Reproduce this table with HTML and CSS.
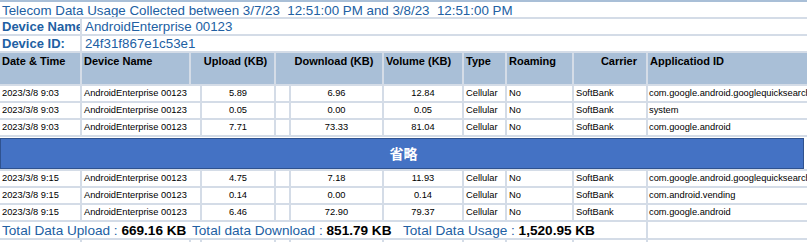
FILE: index.html
```html
<!DOCTYPE html>
<html lang="en">
<head>
<meta charset="utf-8">
<title>Telecom Data Usage</title>
<link rel="stylesheet" href="styles.css">
</head>
<body>
<div class="sheet">
  <div class="c title span-all">Telecom Data Usage Collected between 3/7/23&nbsp; 12:51:00 PM and 3/8/23&nbsp; 12:51:00 PM</div>

  <div class="c label">Device Name</div>
  <div class="c value span-rest">AndroidEnterprise 00123</div>

  <div class="c label">Device ID:</div>
  <div class="c value span-rest">24f31f867e1c53e1</div>

  <div class="c h">Date &amp; Time</div>
  <div class="c h">Device Name</div>
  <div class="c h h-up">Upload (KB)</div>
  <div class="c h h-down">Download (KB)</div>
  <div class="c h">Volume (KB)</div>
  <div class="c h">Type</div>
  <div class="c h">Roaming</div>
  <div class="c h h-carrier">Carrier</div>
  <div class="c h">Applicatiod ID</div>

  <div class="c d">2023/3/8 9:03</div><div class="c d dev">AndroidEnterprise 00123</div><div class="c d num">5.89</div><div class="c d"></div><div class="c d num">6.96</div><div class="c d num">12.84</div><div class="c d">Cellular</div><div class="c d">No</div><div class="c d">SoftBank</div><div class="c d app">com.google.android.googlequicksearchbox</div>
  <div class="c d">2023/3/8 9:03</div><div class="c d dev">AndroidEnterprise 00123</div><div class="c d num">0.05</div><div class="c d"></div><div class="c d num">0.00</div><div class="c d num">0.05</div><div class="c d">Cellular</div><div class="c d">No</div><div class="c d">SoftBank</div><div class="c d app">system</div>
  <div class="c d">2023/3/8 9:03</div><div class="c d dev">AndroidEnterprise 00123</div><div class="c d num">7.71</div><div class="c d"></div><div class="c d num">73.33</div><div class="c d num">81.04</div><div class="c d">Cellular</div><div class="c d">No</div><div class="c d">SoftBank</div><div class="c d app">com.google.android</div>

  <div class="banner-row span-all"><div class="banner">省略</div></div>

  <div class="c d">2023/3/8 9:15</div><div class="c d dev">AndroidEnterprise 00123</div><div class="c d num">4.75</div><div class="c d"></div><div class="c d num">7.18</div><div class="c d num">11.93</div><div class="c d">Cellular</div><div class="c d">No</div><div class="c d">SoftBank</div><div class="c d app">com.google.android.googlequicksearchbox</div>
  <div class="c d">2023/3/8 9:15</div><div class="c d dev">AndroidEnterprise 00123</div><div class="c d num">0.14</div><div class="c d"></div><div class="c d num">0.00</div><div class="c d num">0.14</div><div class="c d">Cellular</div><div class="c d">No</div><div class="c d">SoftBank</div><div class="c d app">com.android.vending</div>
  <div class="c d">2023/3/8 9:15</div><div class="c d dev">AndroidEnterprise 00123</div><div class="c d num">6.46</div><div class="c d"></div><div class="c d num">72.90</div><div class="c d num">79.37</div><div class="c d">Cellular</div><div class="c d">No</div><div class="c d">SoftBank</div><div class="c d app">com.google.android</div>

  <div class="c totals span-total">
    <span class="tot tot-up"><span class="tl">Total Data Upload : </span><b>669.16 KB</b></span>
    <span class="tot tot-down"><span class="tl">Total data Download : </span><b>851.79 KB</b></span>
    <span class="tot"><span class="tl">Total Data Usage : </span><b>1,520.95 KB</b></span>
  </div>
  <div class="c totals-end"></div>

  <div class="c"></div><div class="c"></div><div class="c"></div><div class="c"></div><div class="c"></div><div class="c"></div><div class="c"></div><div class="c"></div><div class="c"></div><div class="c"></div><div class="c"></div>
</div>
</body>
</html>
```
FILE: styles.css
```css
html, body {
  margin: 0;
  padding: 0;
  background: #ffffff;
}

body {
  width: 808px;
  height: 244px;
  overflow: hidden;
  font-family: "Liberation Sans", Arial, sans-serif;
}

.sheet {
  display: grid;
  grid-template-columns: 80px 107px 9px 72px 13px 91px 78px 41px 65px 72px 159px;
  grid-template-rows: 15px 15px 15px 31px 15px 15px 15px 32px 15px 15px 15px 16px 2px;
  gap: 2px;
  width: 807px;
  background: #d4dce7;
  border-top: 2px solid #a9bfd7;
}

.c {
  background: #ffffff;
  overflow: hidden;
  white-space: nowrap;
  min-width: 0;
}

.span-all {
  grid-column: 1 / -1;
}

.span-rest {
  grid-column: 2 / -1;
}

.title {
  color: #2160a3;
  font-size: 13.33px;
  line-height: 17px;
  padding-left: 2px;
}

.label {
  color: #2160a3;
  font-size: 13px;
  font-weight: bold;
  line-height: 16px;
  padding-left: 2px;
}

.value {
  color: #2160a3;
  font-size: 13.33px;
  line-height: 16px;
  padding-left: 3px;
}

.h {
  background: #a9bfd7;
  color: #000000;
  font-size: 11px;
  font-weight: bold;
  line-height: 13px;
  padding: 2px 0 0 2px;
}

.h-up {
  grid-column: span 2;
  text-align: center;
  padding-left: 6px;
}

.h-down {
  grid-column: span 2;
  text-align: center;
  padding-left: 10px;
}

.h-carrier {
  text-align: right;
  padding-right: 9px;
}

.d {
  color: #000000;
  font-size: 9.3px;
  line-height: 15px;
  padding-left: 2px;
}

.dev {
  grid-column: span 2;
  padding-left: 2px;
}

.num {
  text-align: center;
  padding-left: 0;
}

.app {
  padding-left: 1px;
}

.banner-row {
  background: #ffffff;
  padding: 1px 3px 0 0;
}

.banner {
  height: 29px;
  background: #4472c4;
  border: 1px solid #2f528f;
  color: #ffffff;
  font-family: "Noto Sans CJK JP", "Noto Sans CJK SC", sans-serif;
  font-weight: bold;
  font-size: 14px;
  line-height: 29px;
  text-align: center;
  padding-left: 3px;
}

.span-total {
  grid-column: 1 / 11;
}

.totals {
  display: flex;
  padding-left: 2px;
  font-size: 13.6px;
  line-height: 17px;
}

.tot-up {
  flex: 0 0 190px;
}

.tot-down {
  flex: 0 0 211px;
}

.tl {
  color: #2160a3;
}

.tot b {
  color: #000000;
}

.totals-end {
  background: #ffffff;
}
```
